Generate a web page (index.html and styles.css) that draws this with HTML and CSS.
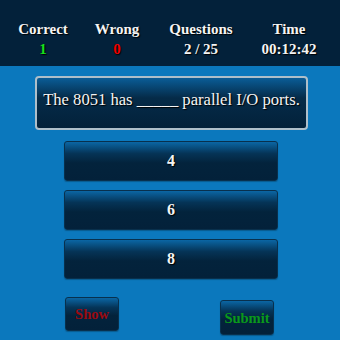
FILE: index.html
```html
<!DOCTYPE html>
<html>
<head>
<meta charset="utf-8">
<link rel="stylesheet" href="styles.css">
</head>
<body>
<div class="header">
  <div class="stat"><div class="label">Correct</div><div class="value correct">1</div></div>
  <div class="stat"><div class="label">Wrong</div><div class="value wrong">0</div></div>
  <div class="stat"><div class="label">Questions</div><div class="value">2 / 25</div></div>
  <div class="stat"><div class="label">Time</div><div class="value">00:12:42</div></div>
</div>
<div class="main">
  <div class="question">The 8051 has _____ parallel I/O ports.</div>
  <div class="options">
    <div class="option">4</div>
    <div class="option">6</div>
    <div class="option">8</div>
  </div>
  <div class="actions">
    <div class="btn show">Show</div>
    <div class="btn submit">Submit</div>
  </div>
</div>
</body>
</html>
```
FILE: styles.css
```css
html, body {
  margin: 0;
  padding: 0;
}
body {
  width: 340px;
  height: 340px;
  overflow: hidden;
  background: #0b78bd;
  font-family: "Liberation Serif", "Times New Roman", serif;
  font-weight: bold;
  color: #f4f4f4;
}
.header {
  height: 66px;
  background: #03213a;
  display: grid;
  grid-template-columns: 70px 78px 90px 86px;
  padding: 0 8px;
  box-sizing: border-box;
  align-content: start;
  padding-top: 19px;
}
.stat {
  text-align: center;
  font-size: 15px;
  line-height: 20px;
  text-shadow: 1px 1px 1px #000;
}
.value.correct { color: #16e01c; }
.value.wrong { color: #f00000; }
.main {
  padding-top: 10px;
}
.question {
  margin-left: 35px;
  width: 273px;
  height: 54px;
  box-sizing: border-box;
  border: 2px solid #aebfca;
  border-radius: 4px;
  background: linear-gradient(to bottom, #0a5d97 0%, #052b48 40%, #03213a 100%);
  font-weight: normal;
  font-size: 16.6px;
  text-align: center;
  padding-top: 12px;
  line-height: 20px;
  letter-spacing: 0;
  text-shadow: 1px 1px 1px #000;
  white-space: nowrap;
}
.options {
  margin-left: 64px;
  width: 214px;
  margin-top: 11px;
  display: flex;
  flex-direction: column;
  gap: 9px;
}
.option {
  height: 40px;
  box-sizing: border-box;
  border: 1px solid #08304d;
  border-radius: 3px;
  background: linear-gradient(to bottom, #0b66a4 0%, #053457 30%, #03233c 55%, #03213a 100%);
  box-shadow: 0 1px 1px rgba(0,0,0,0.25);
  text-align: center;
  font-size: 16px;
  line-height: 38px;
  text-shadow: 1px 1px 1px #000;
}
.actions {
  display: flex;
  align-items: flex-start;
  padding-left: 65px;
  margin-top: 18px;
}
.btn {
  width: 54px;
  height: 34px;
  box-sizing: border-box;
  border: 1px solid #08304d;
  border-radius: 3px;
  background: linear-gradient(to bottom, #0b66a4 0%, #053457 30%, #03233c 55%, #03213a 100%);
  box-shadow: 0 1px 1px rgba(0,0,0,0.25);
  text-align: center;
  font-size: 14.5px;
  line-height: 32px;
}
.show {
  color: #9b0a10;
}
.submit {
  color: #0a9a1a;
  margin-left: 101px;
  margin-top: 3px;
  height: 35px;
  line-height: 34px;
}
```
